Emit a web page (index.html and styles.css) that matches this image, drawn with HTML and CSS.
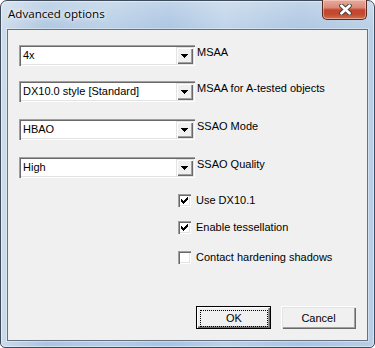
FILE: index.html
```html
<!DOCTYPE html>
<html lang="en">
<head>
  <meta charset="UTF-8" />
  <title>Advanced options</title>
  <link rel="stylesheet" href="styles.css">
</head>
<body>
<div class="window">
  <div class="titlebar">
    <span class="title">Advanced options</span>
    <div class="close">
      <svg width="13" height="11" viewBox="0 0 13 11">
        <path d="M2.5 1.8 L10.5 9.2 M10.5 1.8 L2.5 9.2" stroke="#4a3a36" stroke-width="4.6" stroke-linecap="round"/>
        <path d="M2.5 1.8 L10.5 9.2 M10.5 1.8 L2.5 9.2" stroke="#fff" stroke-width="2.8" stroke-linecap="round"/>
      </svg>
    </div>
  </div>
  <div class="client">
    <div class="field f1">
      <div class="combo"><span class="value">4x</span><span class="drop"><svg width="7" height="4" viewBox="0 0 7 4" shape-rendering="crispEdges"><rect x="0" y="0" width="7" height="1"/><rect x="1" y="1" width="5" height="1"/><rect x="2" y="2" width="3" height="1"/><rect x="3" y="3" width="1" height="1"/></svg></span></div>
      <span class="label">MSAA</span>
    </div>
    <div class="field f2">
      <div class="combo"><span class="value">DX10.0 style [Standard]</span><span class="drop"><svg width="7" height="4" viewBox="0 0 7 4" shape-rendering="crispEdges"><rect x="0" y="0" width="7" height="1"/><rect x="1" y="1" width="5" height="1"/><rect x="2" y="2" width="3" height="1"/><rect x="3" y="3" width="1" height="1"/></svg></span></div>
      <span class="label">MSAA for A-tested objects</span>
    </div>
    <div class="field f3">
      <div class="combo"><span class="value">HBAO</span><span class="drop"><svg width="7" height="4" viewBox="0 0 7 4" shape-rendering="crispEdges"><rect x="0" y="0" width="7" height="1"/><rect x="1" y="1" width="5" height="1"/><rect x="2" y="2" width="3" height="1"/><rect x="3" y="3" width="1" height="1"/></svg></span></div>
      <span class="label">SSAO Mode</span>
    </div>
    <div class="field f4">
      <div class="combo"><span class="value">High</span><span class="drop"><svg width="7" height="4" viewBox="0 0 7 4" shape-rendering="crispEdges"><rect x="0" y="0" width="7" height="1"/><rect x="1" y="1" width="5" height="1"/><rect x="2" y="2" width="3" height="1"/><rect x="3" y="3" width="1" height="1"/></svg></span></div>
      <span class="label">SSAO Quality</span>
    </div>

    <div class="check c1"><span class="box"><svg width="7" height="7" viewBox="0 0 7 7" shape-rendering="crispEdges"><path d="M6 0h1v3h-1v1h-1v1h-1v1h-1v1h-1v-1h-1v-1h-1v-3h1v1h1v1h1v-1h1v-1h1z"/></svg></span>Use DX10.1</div>
    <div class="check c2"><span class="box"><svg width="7" height="7" viewBox="0 0 7 7" shape-rendering="crispEdges"><path d="M6 0h1v3h-1v1h-1v1h-1v1h-1v1h-1v-1h-1v-1h-1v-3h1v1h1v1h1v-1h1v-1h1z"/></svg></span>Enable tessellation</div>
    <div class="check c3"><span class="box"></span>Contact hardening shadows</div>

    <div class="buttons">
      <button class="btn default"><span>OK</span></button>
      <button class="btn">Cancel</button>
    </div>
  </div>
</div>
</body>
</html>
```

FILE: styles.css
```css
body { margin: 0; font-family: "Liberation Sans", Arial, sans-serif; font-size: 11px; color: #000; background: #fff; }

.window { width: 375px; height: 348px; box-sizing: border-box; border: 1px solid #3e4b5a; border-radius: 7px 7px 5px 5px; padding: 0 6px 6px; display: flex; flex-direction: column;
  background:
    linear-gradient(180deg, rgba(255,255,255,0.25) 0, rgba(255,255,255,0) 30px),
    linear-gradient(90deg, rgba(208,222,236,0.9) 0%, rgba(172,196,222,0.7) 12%, rgba(186,208,230,0.7) 28%, rgba(166,194,224,0.7) 45%, rgba(194,214,234,0.7) 60%, rgba(170,196,224,0.7) 80%, rgba(186,208,230,0.8) 100%),
    linear-gradient(180deg, #b9cfe6 0%, #a8c8ea 100%);
  box-shadow: inset 0 0 0 1px rgba(255,255,255,0.45); }

.titlebar { height: 28px; display: flex; align-items: flex-start; justify-content: space-between; }
.title { font-family: "Open Sans", "Noto Sans", sans-serif; font-size: 11.6px; line-height: 16px; padding: 5px 0 0 1px; text-shadow: 0 0 6px #fff, 0 0 3px rgba(255,255,255,0.9); }
.close { width: 45px; height: 20px; box-sizing: border-box; margin: -1px 1px 0 0; border: 1px solid #5a2a22; border-top: none; border-radius: 0 0 5px 5px; display: flex; align-items: center; justify-content: center;
  background: linear-gradient(180deg, #e9a99b 0%, #d98b7a 40%, #c5462f 52%, #c24a31 75%, #d2714f 100%);
  box-shadow: inset 0 0 0 1px rgba(255,230,220,0.45); }
.close svg { margin-left: 2px; }

.client { height: 312px; box-sizing: border-box; border: 1px solid #667280; background: #f0f0f0; padding: 15px 11px 11px; display: flex; flex-direction: column; box-shadow: 0 0 0 1px rgba(255,255,255,0.35); }

.field { display: flex; align-items: flex-start; }
.f2 { margin-top: 15px; }
.f3, .f4 { margin-top: 17px; }
.combo { width: 176px; height: 21px; box-sizing: border-box; padding: 2px; display: flex; background: #fff;
  box-shadow: inset 1px 1px #a0a0a0, inset 2px 2px #696969, inset -1px -1px #fff, inset -2px -2px #e3e3e3; }
.value { flex: 1; line-height: 17px; padding-left: 2px; white-space: nowrap; }
.drop { width: 17px; height: 17px; box-sizing: border-box; background: #f0f0f0; display: flex; align-items: center; justify-content: center;
  box-shadow: inset 1px 1px #e3e3e3, inset 2px 2px #fff, inset -1px -1px #696969, inset -2px -2px #a0a0a0; }
.label { margin: 1px 0 0 2px; line-height: 13px; white-space: nowrap; }

.check { display: flex; align-items: center; gap: 5px; margin-left: 159px; line-height: 13px; }
.c1 { margin-top: 16px; }
.c2 { margin-top: 14px; }
.c3 { margin-top: 17px; }
.box { width: 13px; height: 13px; box-sizing: border-box; background: #fff; display: flex; align-items: center; justify-content: center;
  box-shadow: inset 1px 1px #a0a0a0, inset 2px 2px #696969, inset -1px -1px #fff, inset -2px -2px #e3e3e3; }

.buttons { margin-top: auto; display: flex; justify-content: flex-end; gap: 10px; }
.btn { width: 75px; height: 23px; box-sizing: border-box; border: none; padding: 0; background: #f0f0f0; font: 11px "Liberation Sans", Arial, sans-serif; color: #000;
  box-shadow: inset 1px 1px #fff, inset 2px 2px #e3e3e3, inset -1px -1px #696969, inset -2px -2px #a0a0a0; }
.default { padding: 4px 3px 2px 4px; box-shadow: inset 0 0 0 1px #000, inset 2px 2px #fff, inset -2px -2px #696969, inset -3px -3px #a0a0a0; }
.default span { display: block; height: 100%; box-sizing: border-box; border: 1px dotted #000; line-height: 15px; }
```
